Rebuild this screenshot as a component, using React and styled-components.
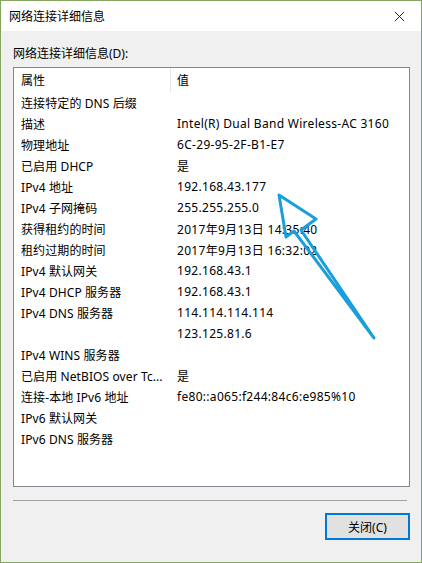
import styled, { createGlobalStyle } from 'styled-components'

const GlobalStyle = createGlobalStyle`
html, body {
  margin: 0;
  padding: 0;
  background: #f0f0f0;
}
body {
  font-family: "Noto Sans", "Noto Sans CJK SC", sans-serif;
  font-size: 12px;
  color: #000;
}
`

const rows = [
  ['连接特定的 DNS 后缀', ''],
  ['描述', 'Intel(R) Dual Band Wireless-AC 3160'],
  ['物理地址', '6C-29-95-2F-B1-E7'],
  ['已启用 DHCP', '是'],
  ['IPv4 地址', '192.168.43.177'],
  ['IPv4 子网掩码', '255.255.255.0'],
  ['获得租约的时间', '2017年9月13日 14:35:40'],
  ['租约过期的时间', '2017年9月13日 16:32:02'],
  ['IPv4 默认网关', '192.168.43.1'],
  ['IPv4 DHCP 服务器', '192.168.43.1'],
  ['IPv4 DNS 服务器', '114.114.114.114'],
  ['', '123.125.81.6'],
  ['IPv4 WINS 服务器', ''],
  ['已启用 NetBIOS over Tc...', '是'],
  ['连接-本地 IPv6 地址', 'fe80::a065:f244:84c6:e985%10'],
  ['IPv6 默认网关', ''],
  ['IPv6 DNS 服务器', ''],
]

const App = () => {
  return (
    <>
      <GlobalStyle />
      <Window>
        <TitleBar>
          <Title>网络连接详细信息</Title>
          <CloseIcon viewBox="0 0 12 12">
            <path d="M1 1 L11 11 M11 1 L1 11" stroke="#111" strokeWidth="1" fill="none" />
          </CloseIcon>
        </TitleBar>
        <Body>
          <Label>网络连接详细信息(D):</Label>
          <ListBox>
            <HeaderRow>
              <NameCell>属性</NameCell>
              <Divider />
              <ValueCell>值</ValueCell>
            </HeaderRow>
            {rows.map(([name, value], i) => (
              <Row key={i}>
                <NameCell>{name}</NameCell>
                <ValueCell $gap>{value}</ValueCell>
              </Row>
            ))}
            <Arrow viewBox="0 0 422 563">
              <polygon
                points="278,194 315,218 300,229 373,337 293,230 285,236"
                fill="none"
                stroke="#1a9fdc"
                strokeWidth="3"
                strokeLinejoin="round"
              />
            </Arrow>
          </ListBox>
          <Separator />
          <Footer>
            <Button>关闭(C)</Button>
          </Footer>
        </Body>
      </Window>
    </>
  )
}

const Window = styled.div`
position: relative;
box-sizing: border-box;
width: 422px;
height: 563px;
border: 1px solid #84a65f;
background: #f0f0f0;
display: flex;
flex-direction: column;
`

const TitleBar = styled.div`
height: 30px;
background: #fff;
display: flex;
align-items: center;
justify-content: space-between;
padding: 0 16px 0 8px;
`

const Title = styled.span`
font-size: 12px;
`

const CloseIcon = styled.svg`
width: 11px;
height: 11px;
`

const Body = styled.div`
flex: 1;
display: flex;
flex-direction: column;
padding: 15px 11px 0 12px;
`

const Label = styled.div`
height: 16px;
line-height: 16px;
margin-bottom: 5px;
`

const ListBox = styled.div`
box-sizing: border-box;
height: 420px;
border: 1px solid #828790;
background: #fff;
display: flex;
flex-direction: column;
`

const HeaderRow = styled.div`
height: 24px;
display: flex;
align-items: center;
`

const Divider = styled.div`
width: 1px;
height: 24px;
background: #e5e5e5;
`

const Row = styled.div`
height: 21px;
display: flex;
align-items: center;
`

const NameCell = styled.div`
box-sizing: border-box;
width: 156px;
padding-left: 7px;
white-space: nowrap;
overflow: hidden;
letter-spacing: 0.1px;
`

const ValueCell = styled.div`
padding-left: ${p => (p.$gap ? '7px' : '6px')};
white-space: nowrap;
letter-spacing: 0.3px;
`

const Arrow = styled.svg`
position: absolute;
left: 0;
top: 0;
width: 422px;
height: 563px;
pointer-events: none;
`

const Separator = styled.div`
height: 1px;
background: #a0a0a0;
margin: 13px 3px 0 0;
`

const Footer = styled.div`
display: flex;
justify-content: flex-end;
padding-top: 12px;
`

const Button = styled.button`
box-sizing: border-box;
width: 85px;
height: 27px;
border: 2px solid #0078d7;
background: #e1e1e1;
font-family: "Noto Sans", "Noto Sans CJK SC", sans-serif;
font-size: 12px;
color: #000;
padding: 0;
`

export default App
